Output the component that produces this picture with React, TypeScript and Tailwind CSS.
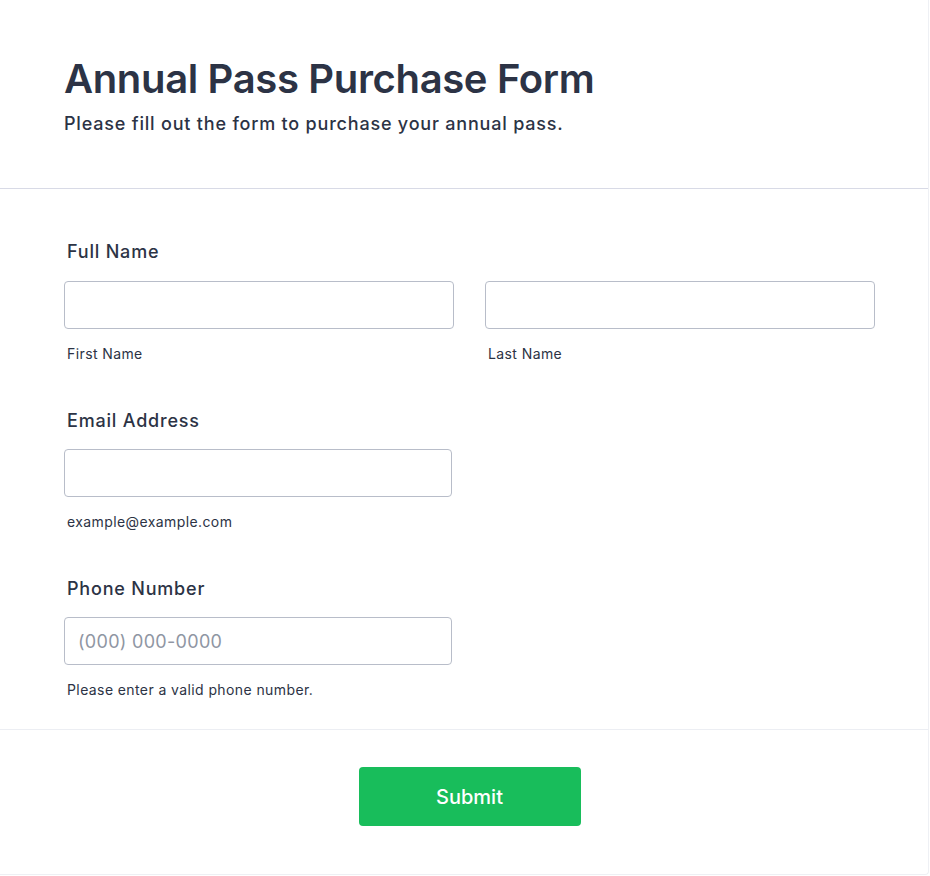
import React from "react";

const font = { fontFamily: "Inter, 'Noto Sans', sans-serif" };

function Field({
  sub,
  placeholder,
  className = "",
}: {
  sub: string;
  placeholder?: string;
  className?: string;
}) {
  return (
    <div className={className}>
      <input
        type="text"
        placeholder={placeholder}
        className="block h-12 w-full rounded border border-[#b8bdc9] bg-white px-[13px] text-lg tracking-[0.3px] text-[#2c3345] placeholder:text-[#8f96a3] outline-none"
      />
      <div className="mt-[15px] pl-[3px] text-sm tracking-[0.4px] text-[#2c3345]">{sub}</div>
    </div>
  );
}

export default function App() {
  return (
    <div className="min-h-[876px] w-[930px] bg-white text-[#2c3345]" style={font}>
      <div className="w-[929px] h-[875px] border-r border-b border-[#eef0f4] rounded-br">
        <header className="px-16 pt-[53px] pb-[52px] border-b border-[#d8dae6]">
          <h1 className="text-[40px] font-semibold leading-[52px] tracking-[-0.35px]">
            Annual Pass Purchase Form
          </h1>
          <p className="mt-[7px] text-lg font-medium leading-6 tracking-[0.8px]">
            Please fill out the form to purchase your annual pass.
          </p>
        </header>

        <main className="px-16 pt-[51px] pb-[29px] border-b border-[#eceef3]">
          <section>
            <h2 className="pl-[3px] text-lg font-medium leading-6 tracking-[0.8px]">Full Name</h2>
            <div className="mt-[17px] grid grid-cols-2 gap-[31px] w-[811px]">
              <Field sub="First Name" />
              <Field sub="Last Name" />
            </div>
          </section>

          <section className="mt-[45px]">
            <h2 className="pl-[3px] text-lg font-medium leading-6 tracking-[0.8px]">Email Address</h2>
            <Field className="mt-[16px] w-[388px]" sub="example@example.com" />
          </section>

          <section className="mt-[45px]">
            <h2 className="pl-[3px] text-lg font-medium leading-6 tracking-[0.8px]">Phone Number</h2>
            <Field
              className="mt-[16px] w-[388px]"
              sub="Please enter a valid phone number."
              placeholder="(000) 000-0000"
            />
          </section>
        </main>

        <footer className="flex justify-center pt-[37px] pl-[11px]">
          <button className="h-[59px] w-[222px] rounded bg-[#18bd5b] text-xl font-medium text-white">
            Submit
          </button>
        </footer>
      </div>
    </div>
  );
}
